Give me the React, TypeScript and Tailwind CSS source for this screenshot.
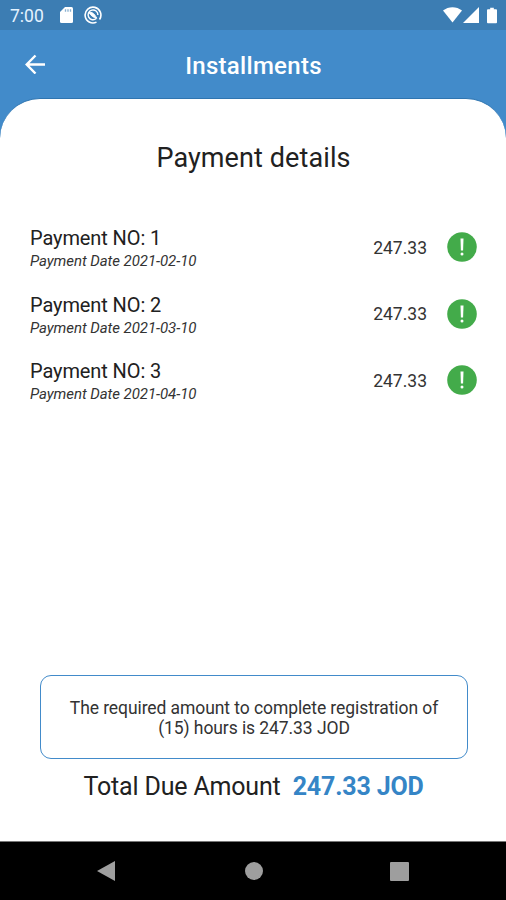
const payments = [
  { no: 1, date: '2021-02-10', amount: '247.33' },
  { no: 2, date: '2021-03-10', amount: '247.33' },
  { no: 3, date: '2021-04-10', amount: '247.33' },
];

function StatusBar() {
  return (
    <div className="flex h-[30px] shrink-0 items-center bg-[#3c7db3] pl-[10px] pr-[9px] text-white">
      <span className="w-[50px] text-[17.5px] leading-[30px] pt-[2px] text-[#e4f3ff]">7:00</span>
      {/* SD card */}
      <svg className="h-4 w-[13px]" viewBox="0 0 13 16" fill="currentColor">
        <path d="M5 0h6.5A1.5 1.5 0 0 1 13 1.500v13a1.500 1.500 0 0 1-1.500 1.500h-10A1.500 1.500 0 0 1 0 14.500V5z" />
        <path d="M5.500 2.300v2.500M8 2.300v2.500M10.500 2.300v2.500" stroke="#3c7db3" strokeWidth="1.300" opacity=".6" />
      </svg>
      <svg className="ml-[11px] h-[18px] w-[18px]" viewBox="0 0 18 18" fill="none" stroke="currentColor">
        <path d="M12.500 16.100A7.900 7.900 0 1 1 15.500 13.500" strokeWidth="1.600" />
        <path d="M12.300 12.500A4.900 4.900 0 1 1 13.900 9" strokeWidth="1.400" />
        <path d="M5 6.500C7.500 5.800 10 7 12.800 12.300C9.500 11.500 7 10 5 6.500z" fill="currentColor" strokeWidth="1" />
      </svg>
      <svg className="ml-auto h-[16px] w-[19px]" viewBox="0 0 19 16" fill="currentColor">
        <path d="M0 3.500C5.500-1 13.500-1 19 3.500L9.500 15.500z" />
      </svg>
      <svg className="ml-[1px] h-4 w-4" viewBox="0 0 16 16" fill="currentColor">
        <path d="M16 0v16H0z" />
      </svg>
      <svg className="ml-[8px] h-[17px] w-[10px]" viewBox="0 0 11 17" fill="currentColor">
        <path d="M3.500 0h4v1.700H10a1 1 0 0 1 1 1V16a1 1 0 0 1-1 1H1a1 1 0 0 1-1-1V2.700a1 1 0 0 1 1-1h2.500z" />
      </svg>
    </div>
  );
}

function Header() {
  return (
    <header className="grid h-[68px] shrink-0 grid-cols-[60px_1fr_60px] items-center text-white">
      <svg className="ml-[25px] h-5 w-5" viewBox="0 0 20 20" fill="none" stroke="currentColor" strokeWidth="2.400">
        <path d="M20 10.500H2M10.500 1.500L1.700 10.500l8.800 9" />
      </svg>
      <h1 className="pt-[3px] pl-px text-center text-[24px] font-medium leading-7 tracking-[0.3px]">Installments</h1>
    </header>
  );
}

function AlertBadge() {
  return (
    <svg className="ml-[20px] h-[30px] w-[30px]" viewBox="0 0 30 30">
      <circle cx="15" cy="15" r="14.800" fill="#43ab4a" />
      <path d="M13.500 6.500h3l-.4 12h-2.200z" fill="#fff" />
      <circle cx="15" cy="22" r="1.500" fill="#fff" />
    </svg>
  );
}

export default function App() {
  return (
    <div className="flex h-[900px] w-[506px] flex-col overflow-hidden bg-[#428bca] font-['Roboto',sans-serif] text-[#212121]">
      <StatusBar />
      <Header />

      <main className="flex flex-1 flex-col rounded-t-[40px] border-t border-[#2f75b0] bg-white">
        <h2 className="mt-[43px] pl-px text-center text-[27px] leading-8 tracking-[0.1px]">Payment details</h2>

        <ul className="mt-[50px] pl-[30px] pr-[29px]">
          {payments.map((p) => (
            <li key={p.no} className="flex h-[66.5px] items-start">
              <div className="flex-1">
                <p className="text-[20px] leading-7 tracking-[-0.1px]">Payment NO: {p.no}</p>
                <p className="mt-[0.4px] text-[15px] italic leading-[18px] tracking-[-0.06px] text-[#333]">Payment Date {p.date}</p>
              </div>
              <div className="flex h-[46px] items-center">
                <span className="pt-[2px] text-[17.5px] text-[#333]">{p.amount}</span>
                <AlertBadge />
              </div>
            </li>
          ))}
        </ul>

        <div className="ml-[40px] mr-[38px] mt-auto flex h-[84px] items-center justify-center rounded-[11px] border-[1.5px] border-[#428bca] text-center text-[17.5px] leading-5 tracking-[-0.08px] text-[#333]">
          <p className="pt-px">
            The required amount to complete registration of
            <br />
            (15) hours is 247.33 JOD
          </p>
        </div>

        <p className="mb-[38px] mt-[12px] flex justify-center gap-[12px] pl-px text-[25px] leading-8 tracking-[-0.17px]">
          <span>Total Due Amount</span>
          <span className="font-bold text-[#3585c6]">247.33 JOD</span>
        </p>
      </main>

      <nav className="flex h-[59px] shrink-0 items-center border-t border-[#777] bg-black pl-[97px] text-[#9e9e9e]">
        <svg className="h-5 w-[18px]" viewBox="0 0 18 20" fill="currentColor">
          <path d="M18 0v20L0 10z" />
        </svg>
        <span className="ml-[130px] h-[18px] w-[18px] rounded-full bg-[#9e9e9e]" />
        <span className="ml-[127px] h-[19px] w-[19px] rounded-[1px] bg-[#9e9e9e]" />
      </nav>
    </div>
  );
}
